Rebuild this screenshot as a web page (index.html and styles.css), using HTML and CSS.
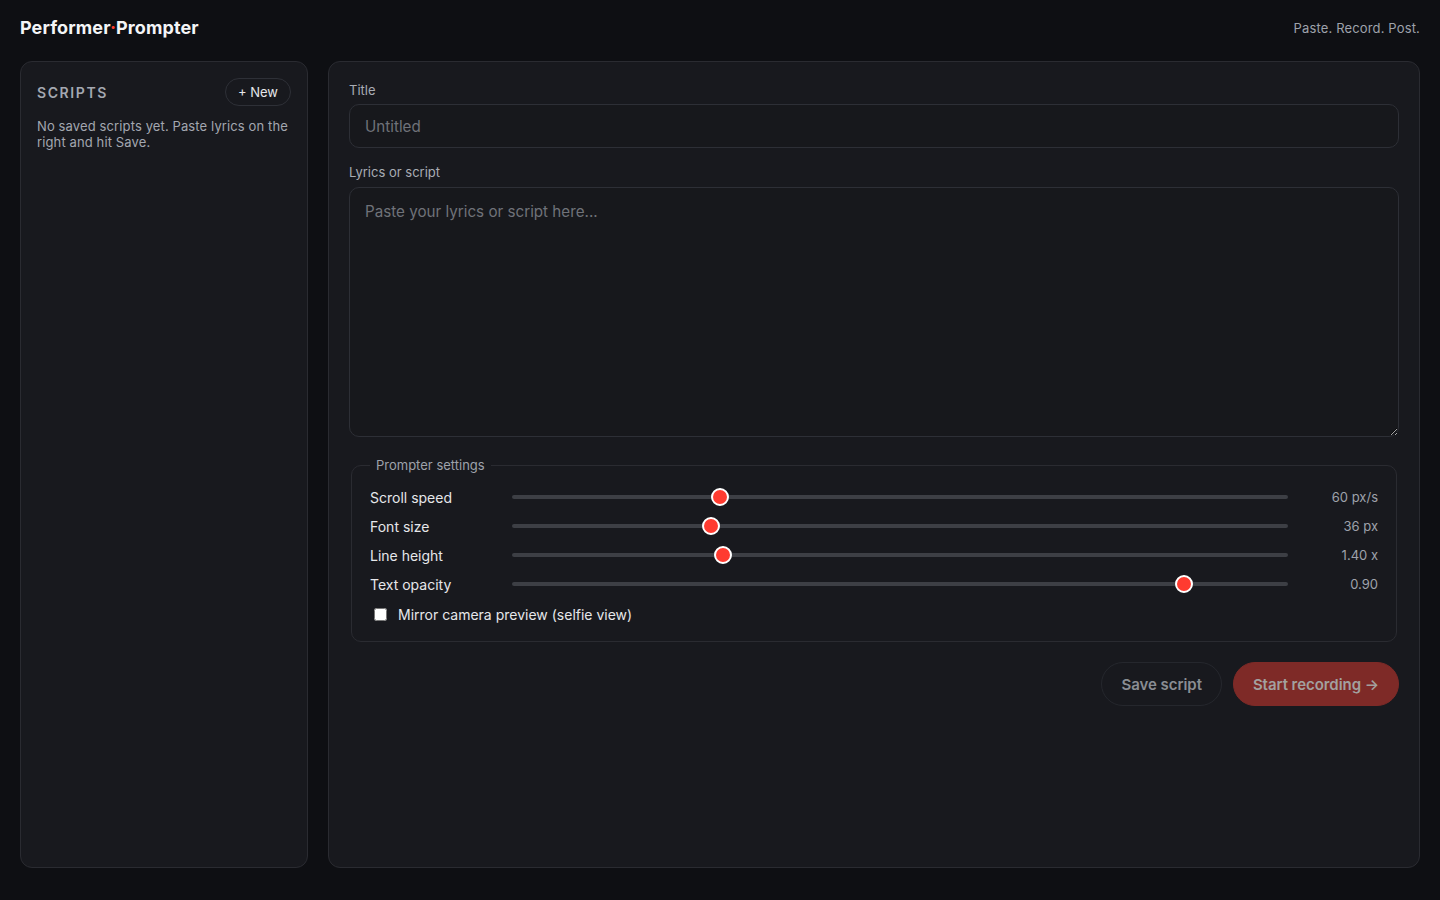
FILE: index.html
```html
<!DOCTYPE html>
<html lang="en">
<head>
  <meta charset="UTF-8">
  <meta name="viewport" content="width=device-width, initial-scale=1.0">
  <title>Performer Prompter</title>
  <link rel="stylesheet" href="styles.css">
</head>
<body>
<header class="topbar">
  <h1 class="brand">Performer<span class="dot">·</span>Prompter</h1>
  <span class="tagline">Paste. Record. Post.</span>
</header>

<div class="layout">
  <!--左侧 脚本列表-->
  <aside class="card sidebar">
    <div class="sidebar-head">
      <h2>Scripts</h2>
      <button class="btn-new" type="button">+ New</button>
    </div>
    <p class="empty">No saved scripts yet. Paste lyrics on the right and hit Save.</p>
  </aside>

  <!--编辑区-->
  <main class="card editor">
    <label class="field-label" for="title">Title</label>
    <input id="title" class="text-input" type="text" placeholder="Untitled">

    <label class="field-label spaced" for="lyrics">Lyrics or script</label>
    <textarea id="lyrics" class="text-area" placeholder="Paste your lyrics or script here..."></textarea>

    <fieldset class="settings">
      <legend>Prompter settings</legend>
      <div class="row">
        <span class="row-label">Scroll speed</span>
        <input type="range" min="10" max="200" value="60">
        <span class="row-value">60 px/s</span>
      </div>
      <div class="row">
        <span class="row-label">Font size</span>
        <input type="range" min="16" max="96" value="36">
        <span class="row-value">36 px</span>
      </div>
      <div class="row">
        <span class="row-label">Line height</span>
        <input type="range" min="1" max="2.5" step="0.05" value="1.4">
        <span class="row-value">1.40 x</span>
      </div>
      <div class="row">
        <span class="row-label">Text opacity</span>
        <input type="range" min="0.2" max="1" step="0.05" value="0.9">
        <span class="row-value">0.90</span>
      </div>
      <label class="check">
        <input type="checkbox">
        Mirror camera preview (selfie view)
      </label>
    </fieldset>

    <div class="actions">
      <button class="btn btn-ghost" type="button" disabled>Save script</button>
      <button class="btn btn-primary" type="button" disabled>Start recording →</button>
    </div>
  </main>
</div>
</body>
</html>
```

FILE: styles.css
```css
* {
  margin: 0;
  padding: 0;
  box-sizing: border-box;
}

html, body {
  height: 100%;
}

body {
  background: #0e0f13;
  color: #e6e7ea;
  font-family: Inter, "Noto Sans", "Liberation Sans", sans-serif;
  font-size: 14px;
}

/*顶栏*/
.topbar {
  height: 54px;
  padding: 0 20px;
  display: flex;
  align-items: center;
  justify-content: space-between;
}

.brand {
  font-size: 18px;
  font-weight: 700;
  color: #f4f5f7;
  letter-spacing: 0.1px;
}

.brand .dot {
  color: #ff3b30;
}

.tagline {
  font-size: 13px;
  color: #9ea2ab;
  letter-spacing: 0.15px;
  margin-top: 2px;
}

.layout {
  height: calc(100% - 54px);
  padding: 7px 20px 32px;
  display: grid;
  grid-template-columns: 288px 1fr;
  gap: 20px;
}

.card {
  background: #18191e;
  border: 1px solid #2a2b31;
  border-radius: 12px;
}

/*侧栏*/
.sidebar {
  padding: 16px;
}

.sidebar-head {
  display: flex;
  align-items: center;
  justify-content: space-between;
  height: 28px;
}

.sidebar-head h2 {
  font-size: 14px;
  font-weight: 600;
  letter-spacing: 1.6px;
  text-transform: uppercase;
  color: #a4a8b1;
}

.btn-new {
  height: 28px;
  padding: 0 12px;
  border: 1px solid #2e3037;
  border-radius: 999px;
  background: transparent;
  color: #e6e7ea;
  font-family: inherit;
  font-size: 13px;
}

.empty {
  margin-top: 12px;
  font-size: 13px;
  line-height: 16px;
  letter-spacing: 0.12px;
  color: #a3a7b0;
}

/*编辑区*/
.editor {
  padding: 20px;
}

.field-label {
  display: block;
  font-size: 13px;
  line-height: 16px;
  color: #a8acb4;
  margin-bottom: 6px;
}

.field-label.spaced {
  margin-top: 16px;
  margin-bottom: 7px;
}

.text-input,
.text-area {
  display: block;
  width: 100%;
  background: #17181c;
  border: 1px solid #2d2f36;
  border-radius: 10px;
  color: #e6e7ea;
  font-family: inherit;
  font-size: 15.2px;
  padding: 0 15px;
  outline: none;
}

.text-input {
  height: 44px;
}

.text-area {
  height: 250px;
  padding: 13px 15px;
  resize: vertical;
  line-height: 22px;
}

.text-input::placeholder,
.text-area::placeholder {
  color: #6f7279;
}

/*设置*/
.settings {
  margin: 20px 2px 0;
  border: 1px solid #2a2b31;
  border-radius: 10px;
  padding: 13px 18px 16px;
  display: flex;
  flex-direction: column;
  gap: 7px;
}

.settings legend {
  padding: 0 6px;
  font-size: 13px;
  line-height: 16px;
  color: #9ea2ab;
}

.row {
  display: grid;
  grid-template-columns: 130px 1fr 78px;
  gap: 12px;
  align-items: center;
  height: 22px;
}

.row-label {
  font-size: 14px;
  color: #e6e7ea;
}

.row-value {
  font-size: 13px;
  color: #9ea2ab;
  text-align: right;
}

.row input[type=range] {
  -webkit-appearance: none;
  appearance: none;
  width: 100%;
  height: 18px;
  background: transparent;
}

.row input[type=range]::-webkit-slider-runnable-track {
  height: 4px;
  border-radius: 2px;
  background: #3d3f45;
}

.row input[type=range]::-webkit-slider-thumb {
  -webkit-appearance: none;
  width: 18px;
  height: 18px;
  margin-top: -7px;
  border-radius: 50%;
  background: #ff3b30;
  border: 2px solid #ffffff;
}

.check {
  display: flex;
  align-items: center;
  gap: 8px;
  height: 22px;
  margin-top: 1px;
  font-size: 14px;
  color: #e6e7ea;
}

.check input {
  margin: 3px 3px 3px 4px;
}

/*按钮*/
.actions {
  margin-top: 20px;
  display: flex;
  justify-content: flex-end;
  gap: 11px;
}

.btn {
  height: 44px;
  padding: 0 19px;
  border-radius: 999px;
  font-family: inherit;
  font-size: 15px;
  font-weight: 600;
  letter-spacing: -0.05px;
}

.btn-ghost {
  background: transparent;
  border: 1px solid #25272d;
  color: #8a8d93;
}

.btn-primary {
  background: #7e2a27;
  border: 1px solid #7e2a27;
  color: #a3a09f;
}
```
